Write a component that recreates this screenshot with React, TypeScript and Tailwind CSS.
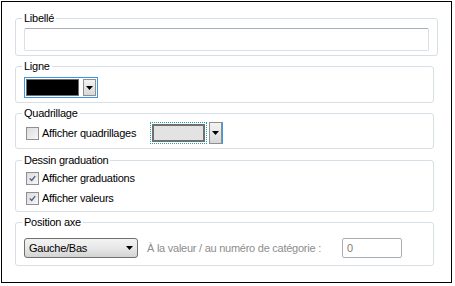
import React from "react";

const font = "font-['Liberation_Sans',Arial,sans-serif] text-[11px] tracking-[-0.25px] text-black";

function Arrow() {
  return (
    <svg width="7" height="4" viewBox="0 0 7 4" className="block">
      <path d="M0 0H7L3.5 4Z" fill="#000" />
    </svg>
  );
}

function DropButton() {
  return (
    <div className="w-[13px] h-full border border-[#8e8f8f] bg-gradient-to-b from-[#f4f4f4] to-[#d8d8d8] flex items-center justify-center">
      <Arrow />
    </div>
  );
}

function CheckBox({ checked }: { checked?: boolean }) {
  return (
    <span className="w-[13px] h-[13px] border border-[#8f8f8f] bg-gradient-to-br from-[#dcdcdc] to-[#f7f7f7] p-[2px] flex items-center justify-center shrink-0">
      {checked && (
        <svg width="9" height="9" viewBox="0 0 9 9" className="block">
          <path d="M1 4.5L3.5 7L8 1.5" stroke="#4d6185" strokeWidth="1.8" fill="none" />
        </svg>
      )}
    </span>
  );
}

function Group({
  title,
  className,
  children,
}: {
  title: string;
  className?: string;
  children: React.ReactNode;
}) {
  return (
    <fieldset className={`w-[419px] border border-[#d5dfe5] rounded-[3px] px-[8px] ${className ?? ""}`}>
      <legend className="-ml-[2px] px-[2px] leading-[14px]">{title}</legend>
      {children}
    </fieldset>
  );
}

export default function App() {
  return (
    <div className={`w-[455px] h-[286px] bg-white pl-[1px] pt-[1px] ${font}`}>
      <div className="w-[451px] h-[282px] border border-black pl-[13px] pt-[9px] flex flex-col gap-[3px]">
        {/* Libellé */}
        <Group title="Libellé" className="pb-[4px]">
          <div className="mt-[3px] w-[405px] h-[23px] border border-[#dbdfe6] border-t-[#abadb3] rounded-[2px] bg-white" />
        </Group>

        {/* Ligne */}
        <Group title="Ligne" className="pb-[4px]">
          <div className="mt-[4px] w-[74px] h-[21px] border border-[#3d95e8] p-[1px] flex gap-[4px]">
            <div className="w-[53px] h-full border border-[#6d6d6d] bg-black" />
            <DropButton />
          </div>
        </Group>

        {/* Quadrillage */}
        <Group title="Quadrillage" className="pb-[4px]">
          <div className="mt-[2px] flex items-center h-[22px]">
            <label className="flex items-center gap-[3px] w-[124px] ml-[2px]">
              <CheckBox />
              <span>Afficher quadrillages</span>
            </label>
            <div className="w-[57px] h-[22px] border border-dotted border-[#1fa3a3] p-[1px]">
              <div className="w-full h-full border-2 border-[#707070] bg-[#e3e3e3]" />
            </div>
            <div className="ml-[2px] h-[22px] border-r border-[#3d95e8]">
              <DropButton />
            </div>
          </div>
        </Group>

        {/* Dessin graduation */}
        <Group title="Dessin graduation" className="pb-[5px] mt-[1px]">
          <div className="mt-[3px] flex flex-col gap-[4px] ml-[2px]">
            <label className="flex items-center gap-[3px] h-[16px]">
              <CheckBox checked />
              <span>Afficher graduations</span>
            </label>
            <label className="flex items-center gap-[3px] h-[16px]">
              <CheckBox checked />
              <span>Afficher valeurs</span>
            </label>
          </div>
        </Group>

        {/* Position axe */}
        <Group title="Position axe" className="pb-[7px]">
          <div className="mt-[9px] flex items-center">
            <div className="w-[114px] h-[20px] border border-[#707070] rounded-[3px] bg-gradient-to-b from-[#f3f3f3] via-[#e8e8e8] to-[#d3d3d3] flex items-center justify-between px-[4px]">
              <span>Gauche/Bas</span>
              <Arrow />
            </div>
            <span className="ml-[9px] text-[#8d8d8d]">À la valeur / au numéro de catégorie :</span>
            <div className="ml-auto mr-[23px] w-[60px] h-[20px] border border-[#abadb3] rounded-[2px] pl-[4px] flex items-center text-[#8a7a6a]">
              0
            </div>
          </div>
        </Group>
      </div>
    </div>
  );
}
